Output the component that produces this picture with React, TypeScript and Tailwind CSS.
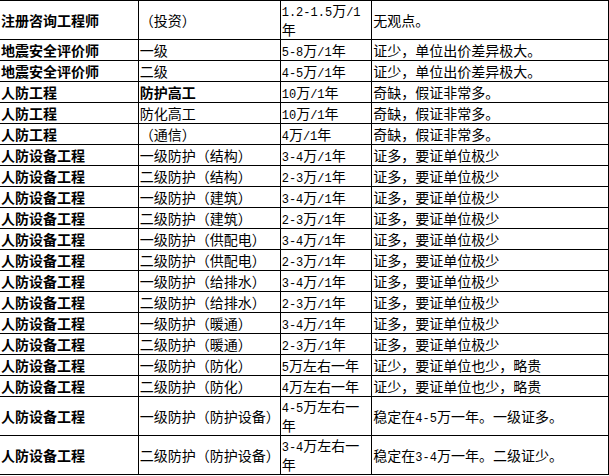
import React from "react";

type Row = {
  name: string;
  level: string;
  levelBold?: boolean;
  pay: string;
  note: string;
  tall?: boolean;
};

const rows: Row[] = [
  { name: "注册咨询工程师", level: "（投资）", pay: "1.2-1.5万/1年", note: "无观点。", tall: true },
  { name: "地震安全评价师", level: "一级", pay: "5-8万/1年", note: "证少，单位出价差异极大。" },
  { name: "地震安全评价师", level: "二级", pay: "4-5万/1年", note: "证少，单位出价差异极大。" },
  { name: "人防工程", level: "防护高工", levelBold: true, pay: "10万/1年", note: "奇缺，假证非常多。" },
  { name: "人防工程", level: "防化高工", pay: "10万/1年", note: "奇缺，假证非常多。" },
  { name: "人防工程", level: "（通信）", pay: "4万/1年", note: "奇缺，假证非常多。" },
  { name: "人防设备工程", level: "一级防护（结构）", pay: "3-4万/1年", note: "证多，要证单位极少" },
  { name: "人防设备工程", level: "二级防护（结构）", pay: "2-3万/1年", note: "证多，要证单位极少" },
  { name: "人防设备工程", level: "一级防护（建筑）", pay: "3-4万/1年", note: "证多，要证单位极少" },
  { name: "人防设备工程", level: "二级防护（建筑）", pay: "2-3万/1年", note: "证多，要证单位极少" },
  { name: "人防设备工程", level: "一级防护（供配电）", pay: "3-4万/1年", note: "证多，要证单位极少" },
  { name: "人防设备工程", level: "二级防护（供配电）", pay: "2-3万/1年", note: "证多，要证单位极少" },
  { name: "人防设备工程", level: "一级防护（给排水）", pay: "3-4万/1年", note: "证多，要证单位极少" },
  { name: "人防设备工程", level: "二级防护（给排水）", pay: "2-3万/1年", note: "证多，要证单位极少" },
  { name: "人防设备工程", level: "一级防护（暖通）", pay: "3-4万/1年", note: "证多，要证单位极少" },
  { name: "人防设备工程", level: "二级防护（暖通）", pay: "2-3万/1年", note: "证多，要证单位极少" },
  { name: "人防设备工程", level: "一级防护（防化）", pay: "5万左右一年", note: "证少，要证单位也少，略贵" },
  { name: "人防设备工程", level: "二级防护（防化）", pay: "4万左右一年", note: "证少，要证单位也少，略贵" },
  { name: "人防设备工程", level: "一级防护（防护设备）", pay: "4-5万左右一年", note: "稳定在4-5万一年。一级证多。", tall: true },
  { name: "人防设备工程", level: "二级防护（防护设备）", pay: "3-4万左右一年", note: "稳定在3-4万一年。二级证少。", tall: true },
];

// half-width runs get the narrow mono face, like the old SimSun digits
const Mixed = ({ text }: { text: string }) => (
  <>
    {text.split(/([\x20-\x7e]+)/).map((part, i) =>
      /^[\x20-\x7e]+$/.test(part) ? (
        <span key={i} className="font-['Liberation_Mono',monospace] text-[12px] leading-[12px]">
          {part}
        </span>
      ) : (
        <React.Fragment key={i}>{part}</React.Fragment>
      )
    )}
  </>
);

const App = () => {
  return (
    <div className="w-[609px] h-[476px] overflow-hidden bg-white">
      <table className="-ml-px table-fixed border-collapse text-[14px] leading-[19px] text-black font-['Noto_Sans_CJK_SC','Noto_Sans',sans-serif]">
        <colgroup>
          <col className="w-[139px]" />
          <col className="w-[140px]" />
          <col className="w-[92px]" />
          <col className="w-[237px]" />
        </colgroup>
        <tbody>
          {rows.map((r, i) => (
            <tr key={i} className={r.tall ? "h-[39px]" : "h-[21px]"}>
              <td className="border border-black p-0 pl-px align-middle font-bold whitespace-nowrap">{r.name}</td>
              <td className={"border border-black p-0 pl-px align-middle whitespace-nowrap " + (r.levelBold ? "font-bold" : "")}>
                {r.level}
              </td>
              <td className={"border border-black p-0 pl-px " + (r.tall ? "align-top" : "align-middle")}>
                <Mixed text={r.pay} />
              </td>
              <td className="border border-black p-0 pl-px align-middle whitespace-nowrap">
                <Mixed text={r.note} />
              </td>
            </tr>
          ))}
        </tbody>
      </table>
    </div>
  );
};

export default App;
